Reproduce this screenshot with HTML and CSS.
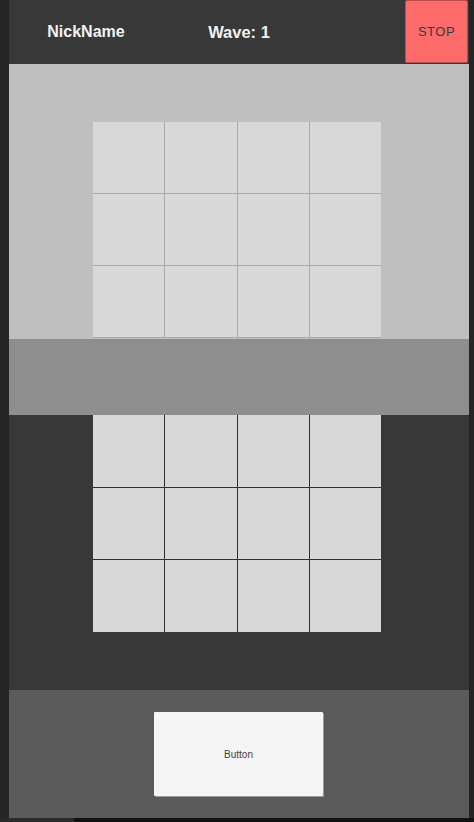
FILE: index.html
```html
<!DOCTYPE html>
<html>
<head>
<meta charset="utf-8">
<link rel="stylesheet" href="styles.css">
</head>
<body>
<div class="frame">
  <div class="app">
    <header class="header">
      <div class="nick">NickName</div>
      <div class="wave">Wave: 1</div>
      <div class="right"><button class="stop">STOP</button></div>
    </header>
    <section class="top">
      <div class="grid grid-light">
        <div class="cell"></div><div class="cell"></div><div class="cell"></div><div class="cell"></div>
        <div class="cell"></div><div class="cell"></div><div class="cell"></div><div class="cell"></div>
        <div class="cell"></div><div class="cell"></div><div class="cell"></div><div class="cell"></div>
      </div>
    </section>
    <section class="band"></section>
    <section class="dark">
      <div class="grid grid-dark">
        <div class="cell"></div><div class="cell"></div><div class="cell"></div><div class="cell"></div>
        <div class="cell"></div><div class="cell"></div><div class="cell"></div><div class="cell"></div>
        <div class="cell"></div><div class="cell"></div><div class="cell"></div><div class="cell"></div>
      </div>
    </section>
    <section class="bottom">
      <button class="btn">Button</button>
    </section>
  </div>
</div>
<div class="hbar"><div class="thumb"></div></div>
</body>
</html>
```
FILE: styles.css
```css
* { box-sizing: border-box; }
html, body { margin: 0; padding: 0; }
body {
  width: 474px;
  height: 822px;
  background: #252525;
  overflow: hidden;
  font-family: "Liberation Sans", Arial, sans-serif;
}
.frame {
  height: 818px;
  padding-left: 9px;
  padding-right: 5px;
}
.app {
  width: 460px;
  height: 818px;
  display: flex;
  flex-direction: column;
}
.header {
  height: 64px;
  background: #383838;
  display: grid;
  grid-template-columns: 154px 152px 154px;
  align-items: center;
  color: #f2f2f2;
  font-weight: bold;
  font-size: 16px;
}
.nick, .wave { text-align: center; }
.wave { font-size: 16.5px; }
.right {
  height: 64px;
  display: flex;
  justify-content: flex-end;
  align-items: flex-start;
  padding-right: 1px;
}
.stop {
  width: 63px;
  height: 63px;
  margin: 0;
  padding: 0;
  background: #fd6b6b;
  border: 1px solid #b94c4c;
  border-radius: 2px;
  color: #3a3a3a;
  font-family: "Liberation Sans", Arial, sans-serif;
  font-size: 13px;
  letter-spacing: 0.5px;
}
.top {
  height: 275px;
  background: #bfbfbf;
  display: flex;
  align-items: flex-end;
  padding-left: 84px;
}
.band {
  height: 76px;
  background: #8e8e8e;
}
.dark {
  height: 275px;
  background: #383838;
  display: flex;
  align-items: flex-start;
  padding-left: 84px;
}
.grid {
  width: 288px;
  display: grid;
  grid-template-columns: repeat(4, 1fr);
  grid-auto-rows: 71px;
  gap: 1px;
}
.grid-light {
  height: 216px;
  margin-bottom: 1px;
  background: #aaaaaa;
}
.grid-dark {
  height: 217px;
  grid-auto-rows: 71.7px;
  background: #303030;
}
.cell { background: #d8d8d8; }
.bottom {
  height: 128px;
  background: #5a5a5a;
  display: flex;
  justify-content: center;
  align-items: flex-start;
  padding-top: 22px;
}
.btn {
  width: 169px;
  height: 84px;
  margin: 0 1px 0 0;
  padding: 0;
  background: #f5f5f5;
  border: none;
  border-radius: 1px;
  box-shadow: 1px 1px 0 #9a9a9a;
  color: #444;
  font-family: "Liberation Sans", Arial, sans-serif;
  font-size: 10px;
}
.hbar {
  height: 4px;
  background: #111;
}
.thumb {
  width: 74px;
  height: 4px;
  background: #2a2a2a;
}
```
